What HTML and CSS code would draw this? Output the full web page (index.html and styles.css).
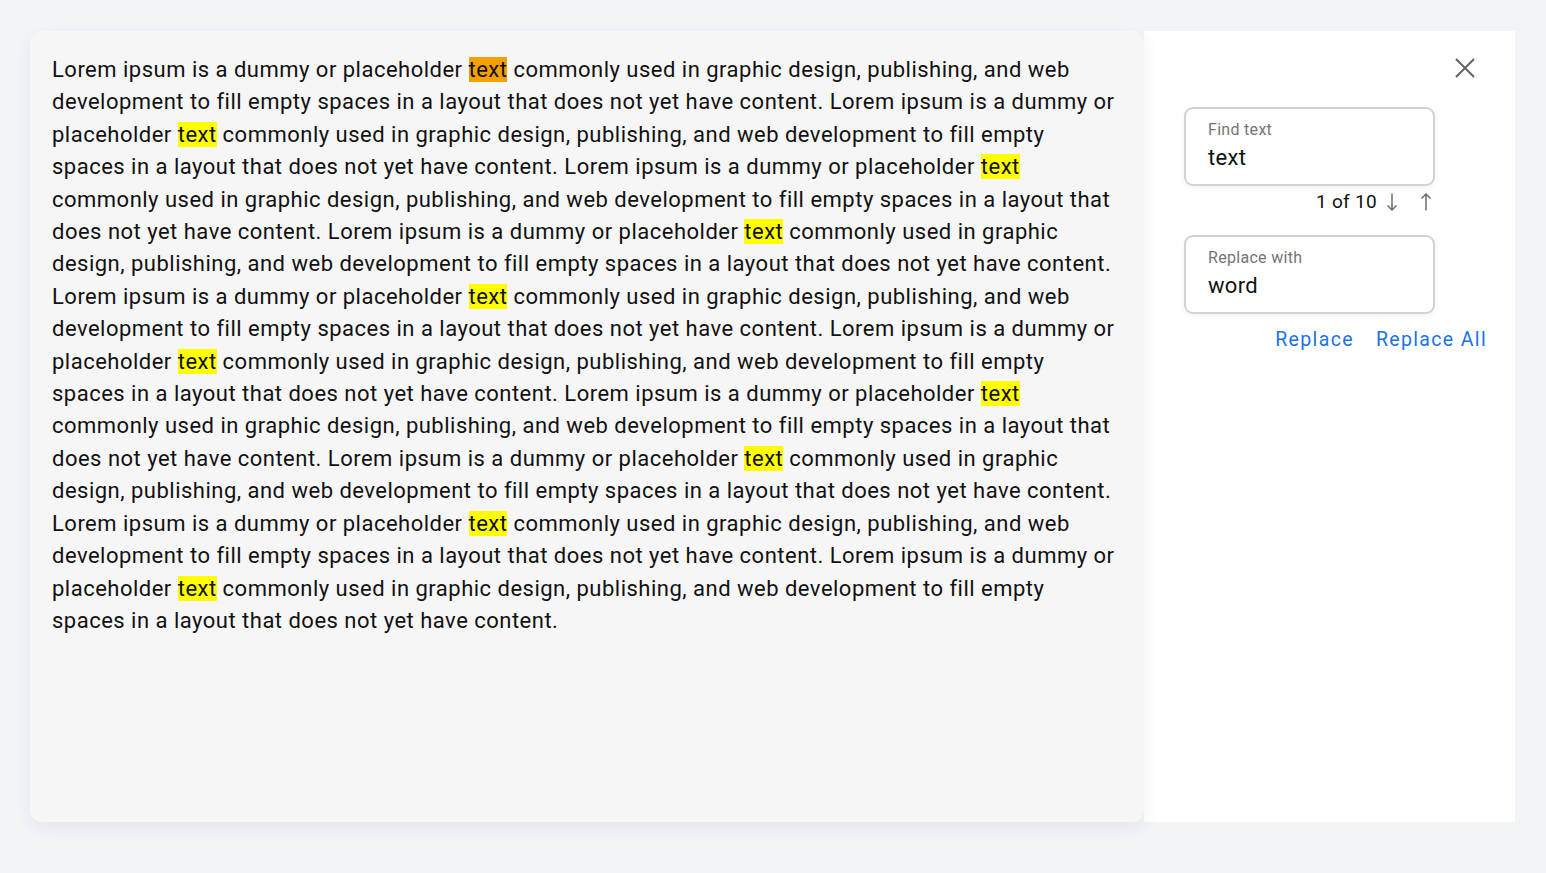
FILE: index.html
```html
<!DOCTYPE html>
<html>
<head>
<meta charset="utf-8">
<link rel="stylesheet" href="styles.css">
</head>
<body>
<div class="layout">
  <div class="doc">
    <p class="doc-text">Lorem ipsum is a dummy or placeholder <span class="hl hl-current">text</span> commonly used in graphic design, publishing, and web development to fill empty spaces in a layout that does not yet have content. Lorem ipsum is a dummy or placeholder <span class="hl">text</span> commonly used in graphic design, publishing, and web development to fill empty spaces in a layout that does not yet have content. Lorem ipsum is a dummy or placeholder <span class="hl">text</span> commonly used in graphic design, publishing, and web development to fill empty spaces in a layout that does not yet have content. Lorem ipsum is a dummy or placeholder <span class="hl">text</span> commonly used in graphic design, publishing, and web development to fill empty spaces in a layout that does not yet have content. Lorem ipsum is a dummy or placeholder <span class="hl">text</span> commonly used in graphic design, publishing, and web development to fill empty spaces in a layout that does not yet have content. Lorem ipsum is a dummy or placeholder <span class="hl">text</span> commonly used in graphic design, publishing, and web development to fill empty spaces in a layout that does not yet have content. Lorem ipsum is a dummy or placeholder <span class="hl">text</span> commonly used in graphic design, publishing, and web development to fill empty spaces in a layout that does not yet have content. Lorem ipsum is a dummy or placeholder <span class="hl">text</span> commonly used in graphic design, publishing, and web development to fill empty spaces in a layout that does not yet have content. Lorem ipsum is a dummy or placeholder <span class="hl">text</span> commonly used in graphic design, publishing, and web development to fill empty spaces in a layout that does not yet have content. Lorem ipsum is a dummy or placeholder <span class="hl">text</span> commonly used in graphic design, publishing, and web development to fill empty spaces in a layout that does not yet have content.</p>
  </div>
  <aside class="panel">
    <div class="panel-top">
      <button class="close-btn" aria-label="Close">
        <svg width="22" height="22" viewBox="0 0 22 22"><path d="M2 2 L20 20 M20 2 L2 20" stroke="#5f6368" stroke-width="2" fill="none"/></svg>
      </button>
    </div>
    <div class="field">
      <span class="field-label">Find text</span>
      <span class="field-value">text</span>
    </div>
    <div class="count-row">
      <span class="count">1 of 10</span>
      <span class="arrow arrow-down">
        <svg width="12" height="20" viewBox="0 0 12 20"><path d="M6 1.5 V18 M1.5 13.5 L6 18 L10.5 13.5" stroke="#6e6e6e" stroke-width="1.5" fill="none"/></svg>
      </span>
      <span class="arrow arrow-up">
        <svg width="12" height="20" viewBox="0 0 12 20"><path d="M6 18.5 V2 M1.5 6.5 L6 2 L10.5 6.5" stroke="#6e6e6e" stroke-width="1.5" fill="none"/></svg>
      </span>
    </div>
    <div class="field field-replace">
      <span class="field-label">Replace with</span>
      <span class="field-value">word</span>
    </div>
    <div class="actions">
      <button class="text-btn">Replace</button>
      <button class="text-btn">Replace All</button>
    </div>
  </aside>
</div>
</body>
</html>
```
FILE: styles.css
```css
html, body {
  margin: 0;
  padding: 0;
}
body {
  background: #f3f4f8;
  font-family: Roboto, "Liberation Sans", sans-serif;
  color: #111;
}
.layout {
  display: flex;
  padding: 31px 31px 51px 30px;
  height: 791px;
}
.doc {
  width: 1114px;
  flex: none;
  background: #f6f6f6;
  border-radius: 12px;
  box-shadow: 0 6px 18px rgba(30, 40, 90, 0.07);
  position: relative;
  z-index: 1;
  box-sizing: border-box;
  padding: 23px 22px;
}
.doc-text {
  margin: 0;
  font-size: 22px;
  letter-spacing: 0.49px;
  line-height: 32.4px;
  color: #111;
}
.hl {
  background: #ffff00;
}
.hl-current {
  background: #f59f00;
}
.panel {
  flex: 1;
  background: #fff;
  box-sizing: border-box;
  padding: 0 28px 0 40px;
  display: flex;
  flex-direction: column;
}
.panel-top {
  display: flex;
  justify-content: flex-end;
  padding-top: 26px;
  padding-right: 11px;
  height: 22px;
}
.close-btn {
  border: none;
  background: none;
  padding: 0;
  width: 22px;
  height: 22px;
  cursor: pointer;
}
.field {
  margin-top: 28px;
  width: 251px;
  height: 79px;
  box-sizing: border-box;
  border: 2px solid #d2d2d2;
  border-radius: 9px;
  box-shadow: 0 2px 6px rgba(0, 0, 0, 0.06);
  padding: 11px 22px 0;
  display: flex;
  flex-direction: column;
}
.field-label {
  font-size: 16px;
  line-height: 20px;
  color: #757575;
  letter-spacing: 0.3px;
}
.field-value {
  font-size: 22px;
  line-height: 30px;
  letter-spacing: 0.3px;
  color: #111;
  margin-top: 3px;
}
.count-row {
  width: 251px;
  display: flex;
  justify-content: flex-end;
  align-items: center;
  height: 31px;
  padding-right: 3px;
  box-sizing: border-box;
}
.count {
  font-size: 19px;
  letter-spacing: 0.3px;
  color: #111;
  margin-right: 9px;
}
.arrow {
  display: flex;
  width: 12px;
  height: 20px;
}
.arrow-down {
  margin-right: 22px;
}
.field-replace {
  margin-top: 18px;
}
.actions {
  display: flex;
  justify-content: flex-end;
  gap: 22px;
  margin-top: 12px;
}
.text-btn {
  border: none;
  background: none;
  padding: 0;
  font-family: Roboto, "Liberation Sans", sans-serif;
  font-size: 19.5px;
  letter-spacing: 1.35px;
  color: #1a73e8;
  line-height: 28px;
  cursor: pointer;
}
```
